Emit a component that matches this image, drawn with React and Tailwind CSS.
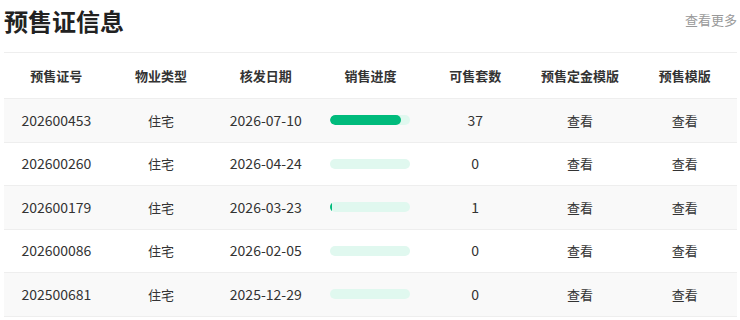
const rows = [
  { no: "202600453", type: "住宅", date: "2026-07-10", pct: 88, left: 37 },
  { no: "202600260", type: "住宅", date: "2026-04-24", pct: 0, left: 0 },
  { no: "202600179", type: "住宅", date: "2026-03-23", pct: 2, left: 1 },
  { no: "202600086", type: "住宅", date: "2026-02-05", pct: 0, left: 0 },
  { no: "202500681", type: "住宅", date: "2025-12-29", pct: 0, left: 0 },
]

const heads = ["预售证号", "物业类型", "核发日期", "销售进度", "可售套数", "预售定金模版", "预售模版"]

export default function App() {
  return (
    <div className="w-[740px] h-[320px] bg-white overflow-hidden pl-[4px] pr-[3px] font-['Microsoft_YaHei','Noto_Sans_CJK_SC',sans-serif] text-[#333]">
      <div className="flex justify-between items-end h-[52px] pb-[14px]">
        <h1 className="text-[24px] font-bold leading-[34px] text-[#222]">预售证信息</h1>
        <a className="text-[13px] text-[#999] leading-[20px] pb-[8px] cursor-pointer">查看更多</a>
      </div>
      <div className="border-t border-[#eee]">
        <div className="grid grid-cols-7 h-[46px] items-center border-b border-[#eee] text-[13px] font-bold text-[#333]">
          {heads.map((h) => (
            <div key={h} className="text-center">{h}</div>
          ))}
        </div>
        {rows.map((r, i) => (
          <div
            key={r.no}
            className={`grid grid-cols-7 h-[43.5px] items-center border-b border-[#eee] text-[14px] ${i % 2 === 0 ? "bg-[#f9f9f9]" : "bg-white"}`}
          >
            <div className="text-center">{r.no}</div>
            <div className="text-center text-[13px]">{r.type}</div>
            <div className="text-center">{r.date}</div>
            <div className="flex justify-center">
              <div className="w-[80px] h-[10px] rounded-full bg-[#e0f8ef] overflow-hidden">
                <div className="h-full rounded-full bg-[#00bb7c]" style={{ width: `${r.pct}%` }} />
              </div>
            </div>
            <div className="text-center">{r.left}</div>
            <div className="text-center text-[13px] cursor-pointer">查看</div>
            <div className="text-center text-[13px] cursor-pointer">查看</div>
          </div>
        ))}
      </div>
    </div>
  )
}
